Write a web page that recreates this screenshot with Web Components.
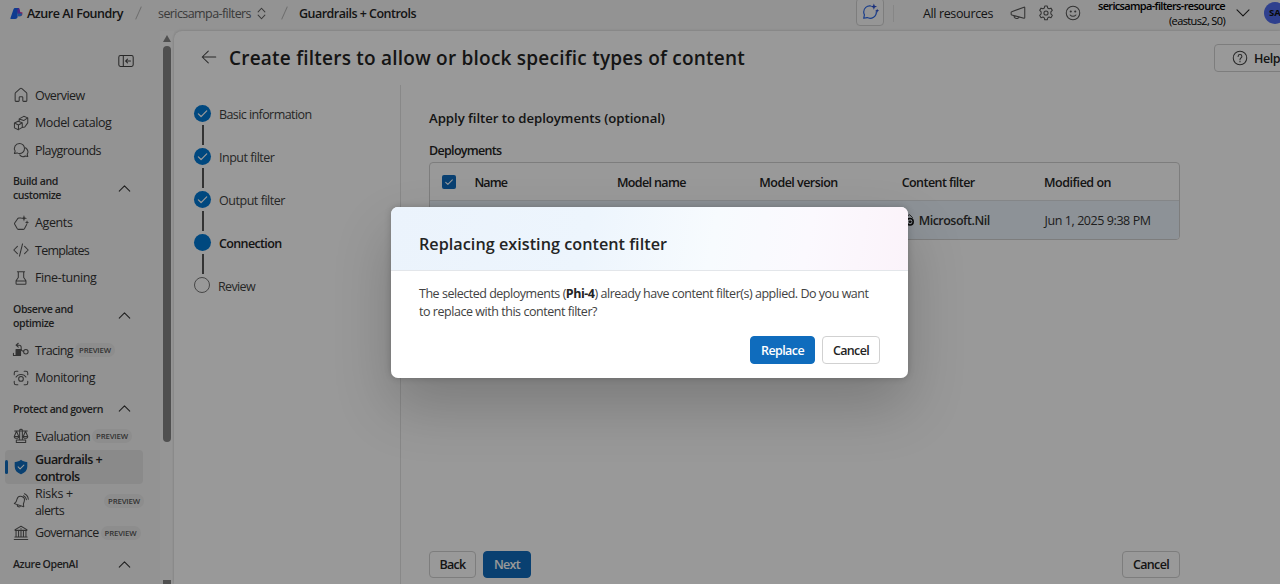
<!DOCTYPE html>
<html lang="en">
<head>
<meta charset="utf-8">
<title>Azure AI Foundry</title>
<style>
html,body{margin:0;height:100%;overflow:hidden}
body{font:12.5px/17px "Open Sans","Noto Sans",sans-serif;color:#242424}
</style>
</head>
<body>
<foundry-app></foundry-app>
<script>
const define = (name, css, html, ready) => customElements.define(name, class extends HTMLElement {
  connectedCallback() {
    if (this.shadowRoot) return;
    const t = document.createElement('template');
    const body = typeof html === 'function' ? html(this) : html;
    t.innerHTML = `<style>*{box-sizing:border-box}${css}</style>${body}`;
    this.attachShadow({mode: 'open'}).append(t.content.cloneNode(true));
    if (ready) ready(this);
  }
});

/* Text set to a given advance width by even tracking. */
define('fit-text', ':host{display:inline-block;white-space:pre;flex:none;width:max-content}', '<slot></slot>', el => {
  const w = parseFloat(el.getAttribute('w'));
  if (!w) return;
  const natural = el.getBoundingClientRect().width;
  el.style.letterSpacing = (w - natural) / el.textContent.length + 'px';
  el.style.width = w + 'px';
});

const icons = {
  home: '<path d="M3.5 8.6v7.6c0 .5.4.9.9.9h2.7c.5 0 .9-.4.9-.9v-3.4c0-.5.4-.9.9-.9h2.2c.5 0 .9.4.9.9v3.4c0 .5.4.9.9.9h2.7c.5 0 .9-.4.9-.9V8.6c0-.5-.2-.9-.5-1.2L11 3c-.6-.5-1.4-.5-2 0L4 7.4c-.3.3-.5.7-.5 1.2z"/>',
  catalog: '<path d="M2.7 10.1l4.1-2 4.6 1.7v5l-4.3 2.6-4.4-2zM2.7 10.1l4.5 2.1 4.2-2.4M7.2 12.2v5.2M8 8.3V5.4l5.1-2.8 4.4 1.7v5.6l-3.300 4.600-2.800.6M8 5.500l5 1.800 4.400-3"/>',
  chat: '<path d="M8.3 2.7a5.6 5.6 0 0 1 0 11.2c-1 0-1.900-.2-2.700-.7l-2.900.7.8-2.700A5.6 5.600 0 0 1 8.300 2.700zM15 7.500c3.200 2.300 3.300 5.200 1.900 7.100l.6 2.700-2.700-.7c-2.500 1.400-5 .5-6.200-1.200"/>',
  agent: '<path d="M10.300 4.500H7.600c-.6 0-1 .3-1.300.7L3 10c-.3.500-.3 1 0 1.500l2.900 4.900c.3.400.7.700 1.300.7h5.300c.6 0 1-.3 1.300-.7l2.500-4.600"/><path fill="currentColor" stroke="none" d="M13.300 1.200l.9 2.600 2.600.9-2.600.9-.9 2.600-.9-2.600-2.600-.9 2.600-.9zM16.700 7l.6 1.700 1.700.6-1.700.6-.6 1.700-.6-1.700-1.700-.6 1.700-.6z"/>',
  code: '<path d="M6 6l-4 4 4 4M14 6l4 4-4 4M11.700 3.200L8.300 16.800"/>',
  flask: '<path d="M6 3h8M7 3v6.500L4.500 13v3.200c0 .5.4.8.8.8h9.400c.4 0 .8-.3.800-.8V13L13 9.500V3M4.700 13.300h10.600"/>',
  trace: '<path d="M7 2.500L4.500 4.700 7 6.900M4.800 4.700h3.400c1.700 0 2 1 2 2.300v2c0 1.500.8 2.500 2.700 2.500"/><circle cx="15.400" cy="12" r="2.500"/><rect x="4.500" y="9.500" width="5" height="6.500" fill="currentColor"/><path d="M1.600 13.500V16H5"/>',
  monitor: '<path d="M2.500 6.500v-2c0-1.100.9-2 2-2h2M13.500 2.500h2c1.100 0 2 .9 2 2v2M17.500 13.500v2c0 1.100-.9 2-2 2h-2M6.500 17.500h-2c-1.100 0-2-.9-2-2v-2M4.500 9c2.300-4 8.700-4 11 0"/><circle cx="10" cy="11" r="2.600"/>',
  scale: '<path d="M3 4.500h14M8.500 3.500v11M11.500 3.500v11M8.500 3.500c0-1.300 3-1.300 3 0M4.800 14.500h10.400v2.800H4.800zM5 4.800L2.500 10.500c0 2.700 5 2.700 5 0zM15 4.800l-2.500 5.700c0 2.700 5 2.700 5 0zM2.500 10.500h5M12.500 10.500h5"/>',
  shield: '<path fill="#0f6cbd" stroke="none" d="M10 2c1.900 1.500 4 2.200 6.500 2.400.3 0 .5.200.5.500v4.600c0 4.100-2.300 6.800-6.800 8.500h-.4C5.300 16.300 3 13.600 3 9.500V4.900c0-.3.2-.5.500-.5C6 4.200 8.100 3.500 10 2z"/><path stroke="#fff" d="M6.800 9.900l2.200 2.200 4.200-4.300"/>',
  bell: '<g transform="rotate(18 9 11)"><path d="M9 4.800c-2.500 0-4.200 1.900-4.200 4.300v3l-1.300 2.700h11l-1.300-2.700v-3C13.200 6.700 11.500 4.800 9 4.800zM7 15c.3 2.300 3.700 2.300 4 0"/></g><path d="M12.800 4.200c1.800.8 2.900 2.200 3.200 4.300M13.800 2c2.500 1 4 3 4.300 6"/>',
  gov: '<path d="M10 2.500l6.500 3.700c.4.300.2.900-.2.900H3.700c-.4 0-.6-.6-.2-.9zM4.500 7v7.500M7.300 7v7.500M10 7v7.500M12.700 7v7.500M15.500 7v7.500M3.200 14.500h13.600M2.500 17.200h15M10 5v.6"/>',
  up: '<path stroke-width="1.400" d="M3 13.500l7-7 7 7"/>',
  down: '<path stroke-width="1.400" d="M2.500 6l7.500 7.500L17.500 6"/>',
  updown: '<path stroke-width="1.400" d="M5.500 7.800l4.500-4.800 4.500 4.800M5.500 12.200l4.500 4.800 4.500-4.800"/>',
  collapse: '<rect x="2" y="4" width="16" height="12" rx="1.800"/><path d="M7 4v12M15 10H9.500M11.700 7.800L9.500 10l2.200 2.200"/>',
  back: '<path d="M17.500 10h-15M9.200 3.500L2.500 10l6.700 6.500"/>',
  horn: '<path d="M17.500 4v11.200c0 .4-.4.600-.8.500L3 12.300c-.4-.1-.6-.4-.6-.8V9.300c0-.4.200-.7.600-.8l13.700-5c.4-.1.800.100.800.5zM5.500 13c-.1 3.500 5 4.400 5.600 1.200"/>',
  gear: '<path d="M8.600 2.300h2.800l.5 2.200 1.500.8 2.100-.7 1.500 2.500-1.600 1.600v2.400l1.600 1.600-1.500 2.500-2.100-.7-1.500.9-.5 2.200H8.600l-.5-2.200-1.500-.9-2.100.7L3 12.700l1.600-1.600V8.700L3 7.100l1.500-2.500 2.100.7 1.500-.8z"/><circle cx="10" cy="10" r="2.300"/>',
  smile: '<circle cx="10" cy="10" r="7.500"/><path d="M6.800 12.200c1.600 2 4.800 2 6.400 0"/><circle cx="7.500" cy="8.300" r=".6" fill="currentColor"/><circle cx="12.500" cy="8.300" r=".6" fill="currentColor"/>',
  help: '<circle cx="10" cy="10" r="7.500"/><path d="M7.900 8.200c0-2.700 4.200-2.700 4.200 0 0 1.500-2.100 1.700-2.100 3.500M10 13.300v1"/>',
  copilot: '<path stroke="#2764e7" stroke-width="1.300" d="M11 3.300C6.500 2.600 3 5.800 3 10c0 1.200.3 2.200.8 3.200L3 17l3.800-.8c5 2.400 10.800-1.200 10.200-6.700"/><path fill="#2a4fd0" stroke="none" d="M14.300.5l.9 2.600 2.600.9-2.600.9-.9 2.600-.9-2.600-2.600-.9 2.600-.9zM18 6.300l.6 1.600 1.600.6-1.600.6-.6 1.600-.6-1.600-1.600-.6 1.600-.6z"/>',
  logo: '<path fill="#e0308c" d="M9 1.500h4.600l2.200 6.500H19v2.800c0 2-1.300 3.400-3.400 3.400H13z"/><path fill="#7a3fe0" d="M12 1.500h2l2.500 8.700h-4.500z"/><path fill="#1a63f0" d="M8.300 1.500h4.900c-1.300.7-1.400 2-1.400 4v8.700c0 2.700-1.500 4.300-4 4.300H1.400c-.8 0-1-.5-.8-1.200L5.400 3.600C5.800 2.300 6.900 1.500 8.300 1.500z"/><path fill="#2e8cf5" d="M12.600 10h6v.8c0 2-1.300 3.400-3.400 3.400h-3.400z"/>',
  check: '<path stroke-width="1.700" d="M4.500 10.500l3.600 3.600 7.500-7.600"/>',
  filter: '<path d="M3 6l8-3.500 4 4"/><circle cx="11.500" cy="12.500" r="4.500" stroke-width="2.200"/><circle cx="11.500" cy="12.500" r="1.400" fill="currentColor"/>'
};
define('ui-icon', ':host{display:block;flex:none}svg{display:block;fill:none;stroke:currentColor;stroke-width:1.150;stroke-linecap:round;stroke-linejoin:round;overflow:visible}.logo{stroke:none}',
  el => { const s = el.getAttribute('size') || 18, n = el.getAttribute('name');
    return `<svg class="${n}" width="${s}" height="${s}" viewBox="0 0 20 20">${icons[n]}</svg>`; });

define('ui-button', `:host{display:flex;align-items:center;justify-content:center;gap:6px;flex:none;box-sizing:border-box;height:28px;border:1px solid #d1d1d1;border-radius:4px;background:#fff;font-weight:600}
  :host([primary]){background:#0f6cbd;border-color:#0f6cbd;color:#fff}`, '<slot></slot>');

define('top-bar', `:host{display:flex;height:31px;flex:none;color:#242424}
  .bar{display:flex;align-items:center;width:1280px;height:26px;flex:none}
  .bar>*{flex:none}
  .s{font-weight:600}.slash{width:1px;height:14px;background:#b5b5b5;transform:rotate(24deg)}
  .chip{display:flex;width:28px;height:28px;border:1px solid #d1d1d1;border-radius:4px;align-items:center;justify-content:center;background:#fafafa;margin-top:-3px}
  .sep{width:1px;height:17px;background:#e0e0e0}
  .res{display:flex;flex-direction:column;align-items:flex-end;font-size:11px;line-height:15px;color:#000}
  .av{width:22px;height:22px;border-radius:50%;background:#4f6bed;font-size:9.500px;font-weight:700;line-height:22px;padding-left:5px;color:#111;margin-top:-1px}`,
 `<div class="bar">
  <ui-icon name="logo" size="13" style="margin-left:10px"></ui-icon>
  <fit-text class="s" w="96" style="margin-left:4px">Azure AI Foundry</fit-text>
  <i class="slash" style="margin-left:15px"></i>
  <fit-text w="93" style="margin-left:19px;color:#616161">sericsampa-filters</fit-text>
  <ui-icon name="updown" size="15" style="margin-left:3px;color:#616161"></ui-icon>
  <i class="slash" style="margin-left:15px"></i>
  <fit-text class="s" w="117" style="margin-left:14px">Guardrails + Controls</fit-text>
  <span class="chip" style="margin-left:440px"><ui-icon name="copilot" size="18"></ui-icon></span>
  <i class="sep" style="margin-left:9px"></i>
  <fit-text w="70" style="margin-left:29px;font-weight:500">All resources</fit-text>
  <ui-icon name="horn" style="margin-left:16px;margin-top:-1px;color:#555"></ui-icon>
  <ui-icon name="gear" style="margin-left:10px;margin-top:-1px;color:#555"></ui-icon>
  <ui-icon name="smile" style="margin-left:9px;margin-top:-1px;color:#555"></ui-icon>
  <span class="res" style="margin-left:16px"><fit-text class="s" w="127">sericsampa-filters-resource</fit-text><fit-text w="56">(eastus2, S0)</fit-text></span>
  <ui-icon name="down" size="16" style="margin-left:10px"></ui-icon>
  <span class="av" style="margin-left:13px">SA</span>
 </div>`);

define('nav-item', `:host{display:flex;align-items:center;box-sizing:border-box;height:27.500px;padding-left:7px;margin:0 17px 0 5px;position:relative;color:#333}
  ui-icon{margin-right:5px;color:#555}.t{flex:none}
  :host([tall]){height:34px}:host([tall]) .t{margin-top:1px}:host([on]){background:#e6e6e6;border-radius:4px;font-weight:600;color:#242424}
  :host([on])::before{content:"";position:absolute;left:0;top:10px;width:2.500px;height:14px;border-radius:2px;background:#0f6cbd}
  .p{height:14px;border-radius:7px;background:#ebebeb;color:#555;font-size:7.800px;line-height:14px;font-weight:600;padding:0 4px;margin-left:2px;flex:none}
  :host([tall]) .p{margin-left:auto;margin-right:-1px}`,
  el => { const parts = el.getAttribute('label').split('|'), ws = (el.getAttribute('w')).split('|');
    return `<ui-icon name="${el.getAttribute('icon')}"></ui-icon><span class="t">${parts.map((p, i) => p && `<fit-text w="${ws[i]}">${p}</fit-text>`).join('<br>')}</span>${el.hasAttribute('preview') ? '<span class="p"><fit-text w="32">PREVIEW</fit-text></span>' : ''}`; });

define('nav-section', `:host{display:flex;align-items:center;justify-content:space-between;padding:10px 28px 7px 13px;font-size:10.600px;line-height:14px;font-weight:600;color:#333}
  ui-icon{margin:-1px 0}`,
  el => { const ws = el.getAttribute('w').split('|');
    return `<span>${el.getAttribute('label').split('|').map((p, i) => `<fit-text w="${ws[i]}">${p}</fit-text>`).join('<br>')}</span><ui-icon name="up" size="15"></ui-icon>`; });

define('side-nav', `:host{display:block;width:160px;flex:none;overflow:hidden}
  .top{height:50.500px;display:flex;justify-content:flex-end;padding:21px 25px 0 0}`,
 `<div class="top"><ui-icon name="collapse" style="color:#444"></ui-icon></div>
  <nav-item icon="home" label="Overview" w="49.500"></nav-item>
  <nav-item icon="catalog" label="Model catalog" w="76.500"></nav-item>
  <nav-item icon="chat" label="Playgrounds" w="66"></nav-item>
  <nav-section label="Build and|customize" w="45|48"></nav-section>
  <nav-item icon="agent" label="Agents" w="37.500"></nav-item>
  <nav-item icon="code" label="Templates" w="54"></nav-item>
  <nav-item icon="flask" label="Fine-tuning" w="61.500"></nav-item>
  <nav-section label="Observe and|optimize" w="60|41"></nav-section>
  <nav-item icon="trace" label="Tracing" w="38" preview></nav-item>
  <nav-item icon="monitor" label="Monitoring" w="60"></nav-item>
  <nav-section label="Protect and govern" w="90"></nav-section>
  <nav-item icon="scale" label="Evaluation" w="55" preview></nav-item>
  <nav-item icon="shield" label="Guardrails +|controls" w="67|44.500" tall on></nav-item>
  <nav-item icon="bell" label="Risks +|alerts" w="38|29" tall preview></nav-item>
  <nav-item icon="gov" label="Governance" w="63.500" preview style="height:29px"></nav-item>
  <nav-section label="Azure OpenAI" w="65"></nav-section>
  <nav-item icon="smile" label="" w="0"></nav-item>`);

define('scroll-rail', `:host{display:flex;flex-direction:column;align-items:center;width:14px;flex:none;background:#f9f9f9;padding-top:4px}
  .a{width:0;height:0;border:4.500px solid transparent;border-top:0;border-bottom:7px solid #858585}
  .b{width:8px;height:396px;border-radius:4px;background:#858585;margin-top:4px}
  .c{width:8px;height:4px;background:#858585;margin-top:auto}`, '<i class="a"></i><i class="b"></i><i class="c"></i>');

define('step-item', `:host{display:flex;height:43px;gap:8px;align-items:flex-start}
  .m{width:17px;display:flex;flex-direction:column;align-items:center;gap:3px;flex:none}
  .d{width:17px;height:17px;border-radius:50%;background:#0078d4;color:#fff;display:grid;place-items:center}
  .l{width:2px;height:20px;background:#555}fit-text{margin-top:1px;color:#424242}
  :host([state=current]) fit-text{font-weight:600;color:#242424}
  :host([state=todo]) .d{width:16px;height:16px;background:none;border:1px solid #777;margin-left:-1px}
  :host([state=todo]) fit-text{margin-left:-1px}:host([state=todo]) .l{display:none}`,
  el => `<span class="m"><span class="d">${el.getAttribute('state') === 'done' ? '<ui-icon name="check" size="15"></ui-icon>' : ''}</span><i class="l"></i></span><fit-text w="${el.getAttribute('w')}">${el.getAttribute('label')}</fit-text>`);

define('deployment-table', `:host{display:block;width:751px;border:1px solid #d1d1d1;border-radius:4px;overflow:hidden;box-sizing:border-box;height:78px}
  .r{display:grid;grid-template-columns:45px 142.400px 142.400px 142.400px 142.400px 1fr;align-items:center;height:37px}
  .h,.b{font-weight:600}.sel{background:#ebf3fc;border-top:1px solid #dcdfe3;height:39px;color:#333}
  .h fit-text{margin-left:-.5px;margin-top:1px}
  .sel span{display:flex;align-items:center}
  .cb{width:14px;height:14px;border-radius:2px;background:#0f6cbd;color:#fff;display:grid;place-items:center;margin-left:12px}`,
 `<div class="r h"><span class="cb"><ui-icon name="check" size="12"></ui-icon></span><fit-text w="32.500">Name</fit-text><fit-text w="69">Model name</fit-text><fit-text w="78.500">Model version</fit-text><fit-text w="73">Content filter</fit-text><fit-text w="67">Modified on</fit-text></div>
  <div class="r sel"><span class="cb"><ui-icon name="check" size="12"></ui-icon></span><fit-text w="32">Phi-4</fit-text><fit-text w="32">Phi-4</fit-text><span>7</span><span class="b"><ui-icon name="filter" size="14" style="margin-right:2.500px;color:#111"></ui-icon><fit-text w="71">Microsoft.Nil</fit-text></span><fit-text w="106">Jun 1, 2025 9:38 PM</fit-text></div>`);

define('wizard-page', `:host{display:flex;flex-direction:column;flex:1;min-width:0;background:#fff;border-top-left-radius:8px;box-shadow:0 0 3px rgba(0,0,0,.2);overflow:hidden}
  header{display:flex;align-items:center;height:54px;padding-left:25px;flex:none}
  h1{margin:0 0 0 12px;font-size:19px;line-height:28px;font-weight:600;color:#242424}
  .body{display:flex;flex:1}
  .steps{width:227px;border-right:1px solid #e3e3e3;padding:20px 0 0 20px}
  main{display:flex;flex-direction:column;padding:23px 0 6px 28px;width:779px;box-sizing:border-box}
  .t{font-size:13.200px;line-height:20px;font-weight:600}.d{font-weight:600;margin:14px 0 3px}
  footer{display:flex;gap:7px;margin-top:auto}footer ui-button{height:27px}`,
 `<header><ui-icon name="back" style="color:#444;margin:-2px 0 0 1px"></ui-icon><h1 style="margin-left:11px"><fit-text w="516">Create filters to allow or block specific types of content</fit-text></h1>
   <ui-button style="width:86px;margin-left:469px;justify-content:flex-start;padding-left:16px"><ui-icon name="help" style="color:#444"></ui-icon><fit-text w="26" style="margin-left:-1px">Help</fit-text></ui-button></header>
  <div class="body"><div class="steps">
    <step-item state="done" label="Basic information" w="92.500"></step-item>
    <step-item state="done" label="Input filter" w="55.500"></step-item>
    <step-item state="done" label="Output filter" w="66"></step-item>
    <step-item state="current" label="Connection" w="62.500"></step-item>
    <step-item state="todo" label="Review" w="37"></step-item></div>
   <main><fit-text class="t" w="236">Apply filter to deployments (optional)</fit-text>
    <fit-text class="d" w="72.500">Deployments</fit-text>
    <deployment-table></deployment-table>
    <footer><ui-button style="width:47px"><fit-text w="26">Back</fit-text></ui-button><ui-button primary style="width:48px"><fit-text w="26">Next</fit-text></ui-button><ui-button style="width:58px;margin-left:auto"><fit-text w="36">Cancel</fit-text></ui-button></footer></main></div>`);

define('confirm-dialog', `:host{position:absolute;inset:0;background:rgba(0,0,0,.4)}
  .box{position:absolute;left:391px;top:207px;width:517px;height:171px;border-radius:7px;background:#fff;overflow:hidden;display:flex;flex-direction:column}
  .sh{position:absolute;left:391px;top:207px;width:517px;height:171px;border-radius:7px;box-shadow:0 0 7px rgba(0,0,0,.2),0 28px 58px rgba(0,0,0,.2)}
  header{height:64px;border-bottom:1px solid #e3e6ea;padding:25px 28px 0;background:linear-gradient(100deg,#ebf3fc 0%,#edf5fd 38%,#f7fbfe 62%,#fbf9fe 80%,#fbf3fa 100%)}
  h2{margin:0;font-size:16.200px;line-height:24px;font-weight:600;color:#242424}
  p{margin:14px 28px 0;line-height:17.500px;color:#424242;display:flex;flex-direction:column}
  b{font-weight:700;color:#242424}
  footer{display:flex;gap:7px;justify-content:flex-end;margin:auto 28px 14px}`,
 `<i class="sh"></i><div class="box"><header><h2><fit-text w="248">Replacing existing content filter</fit-text></h2></header>
  <p><fit-text w="449.500">The selected deployments (<b>Phi-4</b>) already have content filter(s) applied. Do you want</fit-text><fit-text w="178">to replace with this content filter?</fit-text></p>
  <footer><ui-button primary style="width:65px"><fit-text w="43">Replace</fit-text></ui-button><ui-button style="width:58px;color:#242424"><fit-text w="36">Cancel</fit-text></ui-button></footer></div>`);

define('foundry-app', `:host{display:flex;flex-direction:column;position:relative;width:1280px;height:584px;overflow:hidden;background:#f5f5f5}
  .main{display:flex;flex:1;min-height:0}`,
 `<top-bar></top-bar><div class="main"><side-nav></side-nav><scroll-rail></scroll-rail><wizard-page></wizard-page></div><confirm-dialog></confirm-dialog>`);
</script>
</body>
</html>
